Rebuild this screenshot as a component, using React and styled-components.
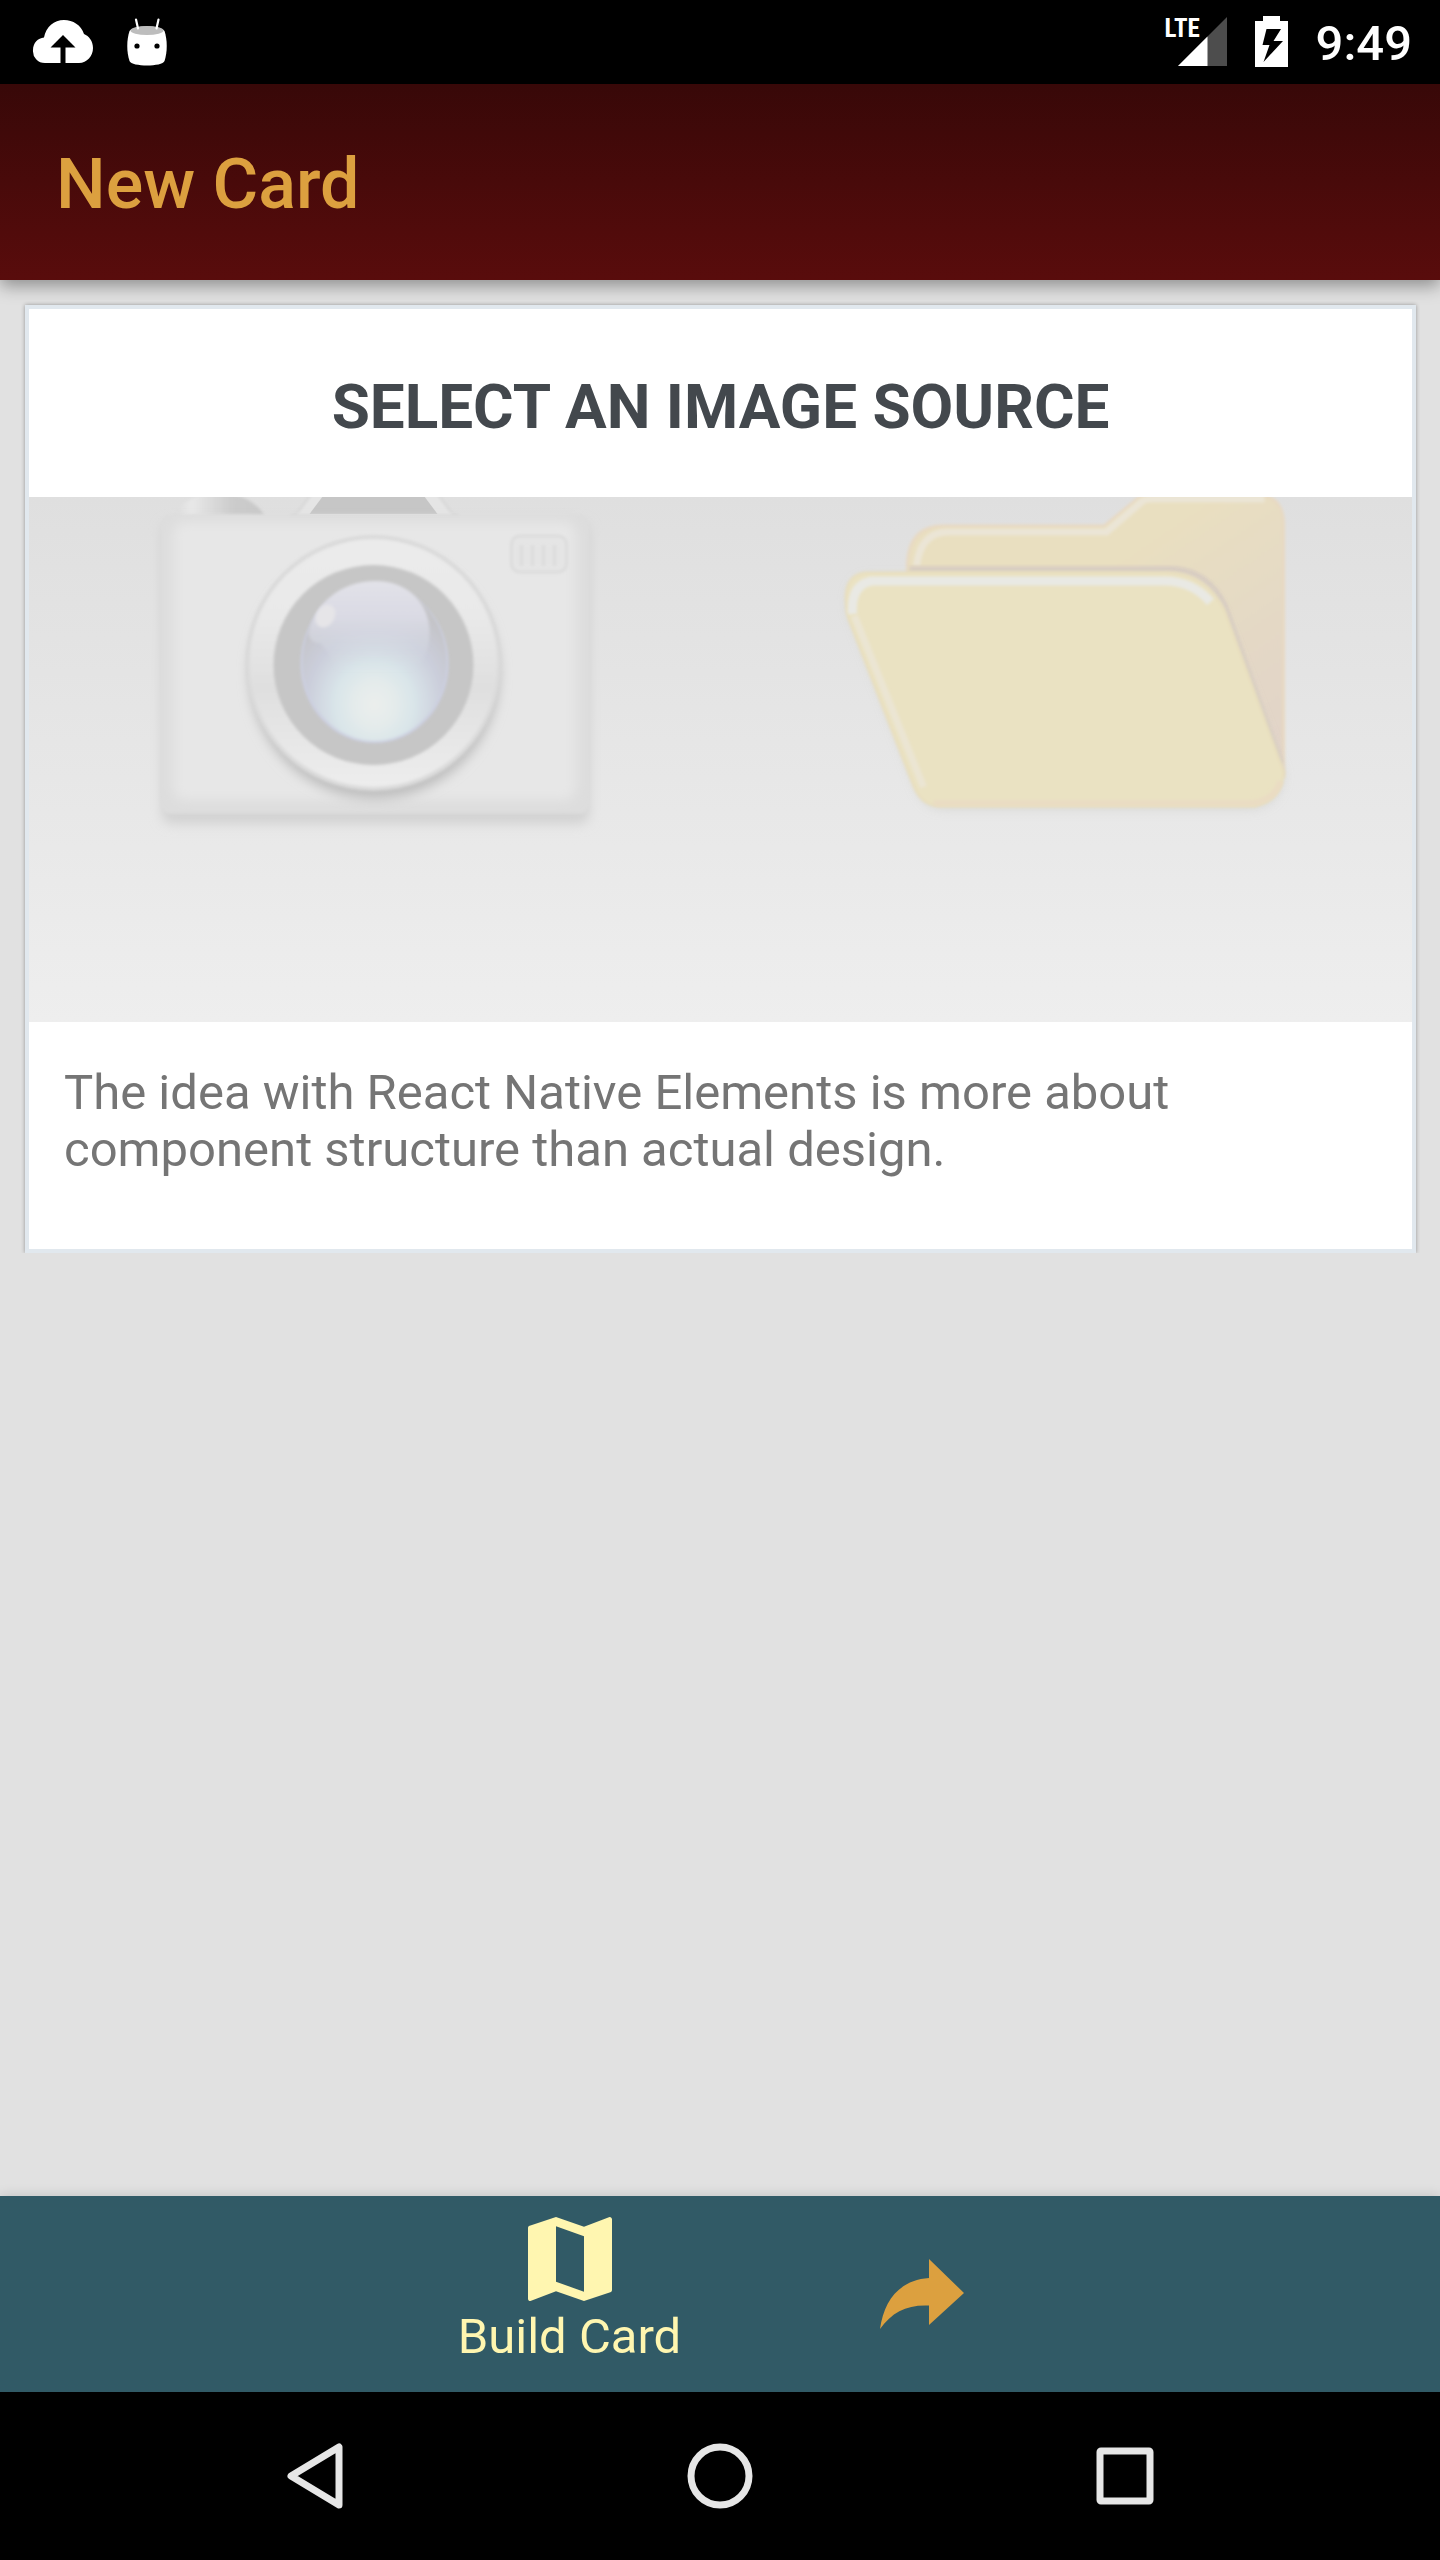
import React from 'react';
import styled, { createGlobalStyle } from 'styled-components';

const Global = createGlobalStyle`
  * { box-sizing: border-box; }
  body { margin: 0; background: #e1e1e1; font-family: Roboto, "Noto Sans", sans-serif; }
  button { font: inherit; border: 0; padding: 0; background: none; cursor: pointer; }
  h1, h2, p { margin: 0; }
  svg { display: block; }
`;

const Screen = styled.div`
  min-height: 100vh;
  display: flex;
  flex-direction: column;
`;

const StatusBar = styled.div`
  height: 84px;
  padding: 0 28px 0 32px;
  display: flex;
  align-items: center;
  justify-content: space-between;
  background: #000;
  color: #fff;
`;

const StatusGroup = styled.div`
  display: flex;
  align-items: center;
  gap: ${(p) => p.$gap}px;
`;

const Clock = styled.time`
  padding-top: 4px;
  font-size: 49px;
  line-height: 80px;
  font-weight: 500;
`;

const Network = styled.div`
  position: relative;
  width: 62px;
  height: 52px;
  display: flex;
  justify-content: flex-end;
`;

const NetworkType = styled.span`
  position: absolute;
  left: 0;
  top: 0;
  font: 700 25px/26px "Roboto Condensed", "Liberation Sans Narrow", Roboto, sans-serif;
`;

const Header = styled.header`
  position: relative;
  height: 196px;
  padding: 4px 56px 0;
  display: flex;
  align-items: center;
  background: linear-gradient(#380808, #590c0c);
  box-shadow: 0 6px 16px rgba(0, 0, 0, 0.36);
`;

const HeaderTitle = styled.h1`
  font-size: 70px;
  line-height: 84px;
  font-weight: 500;
  color: #dca03f;
`;

const Main = styled.main`
  flex: 1;
  padding: 25px 24px 0 25px;
`;

const Card = styled.section`
  border: 4px solid #e1e8ee;
  background: #fff;
  box-shadow: 0 0 4px rgba(0, 0, 0, 0.35);
  clip-path: inset(-4px -4px 0 -4px);
`;

const CardTitle = styled.h2`
  padding: 62px 0 54px;
  font-size: 62px;
  line-height: 72px;
  font-weight: 700;
  text-align: center;
  color: #43484d;
`;

const CardPicture = styled.svg`
  width: 100%;
  height: 525px;
`;

const CardText = styled.p`
  padding: 42px 35px 71px;
  font-size: 49px;
  line-height: 57px;
  color: #757575;
`;

const TabBar = styled.nav`
  height: 196px;
  display: flex;
  justify-content: center;
  background: #315a66;
  box-shadow: 0 0 12px rgba(0, 0, 0, 0.15);
`;

const Tab = styled.button`
  flex: 0 1 ${(p) => p.$width}px;
  display: flex;
  flex-direction: column;
  align-items: center;
  justify-content: center;
  gap: 8px;
  && { padding-bottom: ${(p) => (p.$active ? 6 : 0)}px; }
  font-size: 49px;
  line-height: 56px;
  color: ${(p) => (p.$active ? '#fff6b0' : '#dca03f')};
`;

const SystemBar = styled.nav`
  height: 168px;
  display: flex;
  justify-content: center;
  background: #000;
`;

const SystemButton = styled.button`
  flex: 0 1 405px;
  display: flex;
  align-items: center;
  justify-content: center;
`;

const CloudIcon = () => (
  <svg width="62" height="46" viewBox="32 20 62 46" aria-hidden="true">
    <path fill="#fff" d="M45 64a12 12 0 0 1-12-13c0-7 5-12 11-12.500C46 28 54 21 64 21c9 0 17 5 20 14 5 2 9 7 9 14 0 8-6 15-14 15H65.500V48.500H75.500L63 36 50.500 48.500H60.500V64z" />
  </svg>
);

const DebugIcon = () => (
  <svg width="42" height="54" viewBox="126 11 42 54" aria-hidden="true">
    <path fill="#fff" d="M129.500 27c4-6 31-6 35 0 3 9 3 21 0 30-2 6-33 6-35 0-3-9-3-21 0-30z" />
    <ellipse cx="147" cy="26.500" rx="16.500" ry="4.500" fill="#bdbdbd" />
    <path stroke="#fff" strokeWidth="2.200" strokeLinecap="round" d="M136 15.500l2 9M158.500 15.500l-2 9" />
    <circle cx="137" cy="42" r="2.600" />
    <circle cx="157" cy="42" r="2.600" />
  </svg>
);

const SignalIcon = () => (
  <svg width="50" height="52" viewBox="0 0 50 52" aria-hidden="true">
    <path fill="#4d4d4d" d="M50 1v49H1z" />
    <path fill="#fff" d="M30.500 20.500V50H1z" />
  </svg>
);

const BatteryIcon = () => (
  <svg width="33" height="52" viewBox="0 0 33 52" aria-hidden="true">
    <path fill="#fff" d="M8 0h17v5h8v46H0V5h8z" />
    <path d="M11.500 13H26l-7.500 12H28L8.500 46l6-17H7.500z" />
  </svg>
);

const MapIcon = () => (
  <svg width="84" height="84" viewBox="3 3 18 18" fill="currentColor" aria-hidden="true">
    <path d="M20.500 3l-.160.030L15 5.100 9 3 3.360 4.900c-.210.070-.360.250-.360.480V20.500c0 .280.220.500.500.500l.160-.030L9 18.900l6 2.100 5.640-1.900c.210-.070.360-.250.360-.480V3.500c0-.280-.220-.500-.500-.500zM15 19l-6-2.110V5l6 2.110V19z" />
  </svg>
);

const ForwardIcon = () => (
  <svg width="84" height="70" viewBox="0 0 84 70" fill="currentColor" aria-hidden="true">
    <path d="M49 0L84 34 49 66V46.500C27 45.500 12 53 0 70 4 42 19 21 49 19z" />
  </svg>
);

const SourcePicture = () => (
  <CardPicture viewBox="29 497 1384 525" preserveAspectRatio="xMidYMid slice" role="img" aria-label="Camera and folder">
    <defs>
      <linearGradient id="backdrop" x2="0" y2="1">
        <stop offset="0" stopColor="#dfdfdf" />
        <stop offset="1" stopColor="#eeeeee" />
      </linearGradient>
      <linearGradient id="shutter">
        <stop offset="0" stopColor="#dcdcdc" />
        <stop offset="0.200" stopColor="#e8e8e8" />
        <stop offset="0.650" stopColor="#cccccc" />
        <stop offset="1" stopColor="#c8c8c8" />
      </linearGradient>
      <linearGradient id="ring" x2="0" y2="1">
        <stop offset="0" stopColor="#ebebeb" />
        <stop offset="0.300" stopColor="#e9e9e9" />
        <stop offset="0.600" stopColor="#dfdfdf" />
        <stop offset="1" stopColor="#ededed" />
      </linearGradient>
      <radialGradient id="lens" cx="0.500" cy="0.770" r="0.780">
        <stop offset="0" stopColor="#ebeeec" />
        <stop offset="0.180" stopColor="#e4ebeb" />
        <stop offset="0.350" stopColor="#d9e5e9" />
        <stop offset="0.600" stopColor="#cbcedb" />
        <stop offset="0.850" stopColor="#c4c4c8" />
        <stop offset="1" stopColor="#c5c5c5" />
      </radialGradient>
      <linearGradient id="glare" x2="0" y2="1">
        <stop offset="0" stopColor="#e2e2e8" />
        <stop offset="0.400" stopColor="#dadae4" />
        <stop offset="1" stopColor="#d2d9e1" stopOpacity="0" />
      </linearGradient>
      <linearGradient id="folderBack" x2="0.900" y2="1">
        <stop offset="0.400" stopColor="#e9dfc0" />
        <stop offset="0.700" stopColor="#e4d9c5" />
        <stop offset="1" stopColor="#e1d3c8" />
      </linearGradient>
      <filter id="soft" x="-20%" y="-20%" width="140%" height="140%">
        <feGaussianBlur stdDeviation="6" />
      </filter>
      <filter id="edge" x="-20%" y="-20%" width="140%" height="140%">
        <feGaussianBlur stdDeviation="1.500" />
      </filter>
    </defs>
    <rect x="29" y="497" width="1384" height="525" fill="url(#backdrop)" />

    <path d="M174 515c8-13 24-22 45-22 22 0 37 9 46 22z" fill="url(#shutter)" filter="url(#edge)" />
    <path d="M290 516q6-1 10-6l22-30h106l22 30q4 5 10 6z" fill="#e5e5e5" stroke="#d5d5d5" strokeWidth="2" filter="url(#edge)" />
    <path d="M310 514l24-32h80l24 32z" fill="#c6c6c6" />
    <rect x="162" y="522" width="428" height="302" rx="10" fill="#d2d2d2" filter="url(#soft)" />
    <rect x="161" y="515" width="429" height="299" rx="10" fill="#dddddd" filter="url(#edge)" />
    <rect x="174" y="522" width="402" height="278" rx="12" fill="#e7e7e7" filter="url(#soft)" />
    <path d="M172 519h406" stroke="#e6e6e6" strokeWidth="8" filter="url(#edge)" />
    <rect x="512" y="536" width="55" height="36" rx="8" fill="#e5e5e5" stroke="#dcdcdc" strokeWidth="3" filter="url(#edge)" />
    <path d="M522 545v21M533 545v21M544 545v21M555 545v21" stroke="#dddddd" strokeWidth="4" filter="url(#edge)" />
    <circle cx="375" cy="674" r="125" fill="#bebebe" filter="url(#soft)" />
    <circle cx="374" cy="663" r="128" fill="#dadada" filter="url(#edge)" />
    <circle cx="374" cy="663" r="124" fill="url(#ring)" filter="url(#edge)" />
    <circle cx="374" cy="665" r="100" fill="#c6c6c6" filter="url(#edge)" />
    <ellipse cx="375" cy="664" rx="74" ry="79" fill="#cccfe0" filter="url(#edge)" />
    <ellipse cx="375" cy="662" rx="72" ry="79" fill="url(#lens)" filter="url(#edge)" />
    <path d="M309 633c6-29 32-52 67-52 33 0 54 23 54 51 0 17-5 28-16 39H337c-3-12-9-20-16-28-5 1-11-2-12-10z" fill="url(#glare)" filter="url(#edge)" />
    <ellipse cx="326" cy="616" rx="9" ry="12" fill="#e6e5e8" filter="url(#edge)" transform="rotate(30 326 616)" />

    <path d="M908 575v-12q2-37 36-37h161l34-28q6-4 14-4h107q24 4 24 30v252z" fill="url(#folderBack)" stroke="#e8d9c2" strokeWidth="3" filter="url(#edge)" />
    <path d="M917 566q4-33 30-34h160l36-31q3-2 8-2h114" fill="none" stroke="#ebe5d6" strokeWidth="7" filter="url(#edge)" />
    <path d="M1278 520v246" stroke="#e3cdc3" strokeWidth="5" filter="url(#edge)" />
    <path d="M910 569h265q34 3 50 36l56 158" fill="none" stroke="#d9cec2" strokeWidth="6" filter="url(#edge)" />
    <path d="M868 578q-20 2-18 32l66 172q8 26 27 26h310q28-4 30-34l-64-165q-15-30-50-31z" fill="#cdcdc8" filter="url(#soft)" opacity="0.700" />
    <path d="M866 573q-22 2-19 32 0 9 4 18l63 162q8 21 27 21h314q27-6 29-34l-59-161q-18-36-56-38z" fill="#eae2c2" stroke="#e9dfbe" strokeWidth="3" filter="url(#edge)" />
    <path d="M853 614q-2-29 19-33h293q28 0 46 21" fill="none" stroke="#e9e9e4" strokeWidth="9" filter="url(#edge)" />
    <path d="M855 616l69 171" fill="none" stroke="#ebe5d3" strokeWidth="7" filter="url(#edge)" />
    <path d="M934 803h319q22-3 28-22" fill="none" stroke="#eadcc3" strokeWidth="6" filter="url(#edge)" />
  </CardPicture>
);

export default function App() {
  return (
    <Screen>
      <Global />
      <StatusBar>
        <StatusGroup $gap={32}>
          <CloudIcon />
          <DebugIcon />
        </StatusGroup>
        <StatusGroup $gap={28}>
          <Network>
            <NetworkType>LTE</NetworkType>
            <SignalIcon />
          </Network>
          <BatteryIcon />
          <Clock>9:49</Clock>
        </StatusGroup>
      </StatusBar>
      <Header>
        <HeaderTitle>New Card</HeaderTitle>
      </Header>
      <Main>
        <Card>
          <CardTitle>SELECT AN IMAGE SOURCE</CardTitle>
          <SourcePicture />
          <CardText>
            The idea with React Native Elements is more about component structure than actual design.
          </CardText>
        </Card>
      </Main>
      <TabBar>
        <Tab $width={404} $active>
          <MapIcon />
          Build Card
        </Tab>
        <Tab $width={301} aria-label="Share">
          <ForwardIcon />
        </Tab>
      </TabBar>
      <SystemBar>
        <SystemButton aria-label="Back">
          <svg width="58" height="66" viewBox="0 0 58 66" aria-hidden="true">
            <path d="M53 4v58L5 33z" fill="none" stroke="#e6e6e6" strokeWidth="7" strokeLinejoin="round" />
          </svg>
        </SystemButton>
        <SystemButton aria-label="Home">
          <svg width="66" height="66" viewBox="0 0 66 66" aria-hidden="true">
            <circle cx="33" cy="33" r="29" fill="none" stroke="#e6e6e6" strokeWidth="7" />
          </svg>
        </SystemButton>
        <SystemButton aria-label="Recent apps">
          <svg width="60" height="60" viewBox="0 0 60 60" aria-hidden="true">
            <rect x="5" y="5" width="50" height="50" rx="1" fill="none" stroke="#e6e6e6" strokeWidth="7" strokeLinejoin="round" />
          </svg>
        </SystemButton>
      </SystemBar>
    </Screen>
  );
}
